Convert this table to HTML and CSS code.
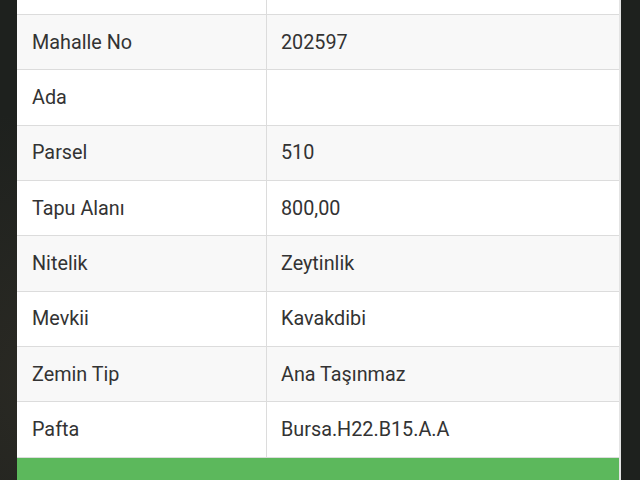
FILE: index.html
```html
<!DOCTYPE html>
<html lang="tr">
<head>
<meta charset="utf-8">
<title>Parsel Bilgileri</title>
<link rel="stylesheet" href="styles.css">
</head>
<body>
<div class="screen">
  <div class="panel">
    <div class="row"><div class="cell key">Mahalle / Köy</div><div class="cell val">Ilıca</div></div>
    <div class="row"><div class="cell key">Mahalle No</div><div class="cell val">202597</div></div>
    <div class="row"><div class="cell key">Ada</div><div class="cell val"></div></div>
    <div class="row"><div class="cell key">Parsel</div><div class="cell val">510</div></div>
    <div class="row"><div class="cell key">Tapu Alanı</div><div class="cell val">800,00</div></div>
    <div class="row"><div class="cell key">Nitelik</div><div class="cell val">Zeytinlik</div></div>
    <div class="row"><div class="cell key">Mevkii</div><div class="cell val">Kavakdibi</div></div>
    <div class="row"><div class="cell key">Zemin Tip</div><div class="cell val">Ana Taşınmaz</div></div>
    <div class="row"><div class="cell key">Pafta</div><div class="cell val">Bursa.H22.B15.A.A</div></div>
    <div class="footer"></div>
  </div>
</div>
</body>
</html>
```

FILE: styles.css
```css
html, body {
  margin: 0;
  padding: 0;
}
body {
  background: #1f221f;
  font-family: Roboto, "Noto Sans", "Liberation Sans", sans-serif;
  color: #333;
}
.screen {
  height: 480px;
  overflow: hidden;
  padding: 0 19px 0 17px;
  background: radial-gradient(circle at 10% 80%, #2b2a24 0, #1e211e 40%), #1e211e;
}
.panel {
  margin-top: -40.4px;
  background: #fff;
  border-right: 2px solid #e4e4e4;
}
.row {
  display: grid;
  grid-template-columns: 250px 1fr;
  height: 55.35px;
  box-sizing: border-box;
  border-bottom: 1px solid #dcdcdc;
}
.row:nth-child(even) {
  background: #f8f8f8;
}
.cell {
  display: flex;
  align-items: center;
  font-size: 19.8px;
}
.key {
  padding-left: 15px;
  border-right: 1px solid #dcdcdc;
}
.val {
  padding-left: 14px;
}
.footer {
  height: 40px;
  background: #5cb85c;
}
```
